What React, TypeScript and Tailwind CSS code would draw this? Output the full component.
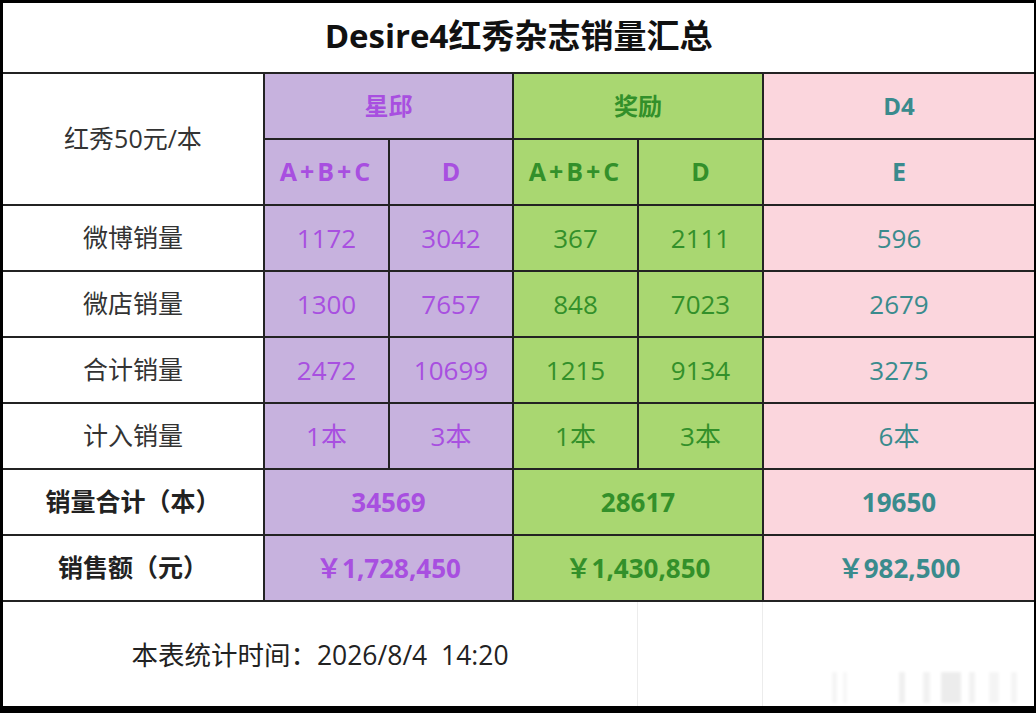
import React from "react";

const FONT = { fontFamily: '"Open Sans", "Noto Sans CJK SC", sans-serif' };

const P = "bg-[#c7b2de]";
const G = "bg-[#a9d771]";
const K = "bg-[#fbd6dd]";
const PT = "text-[#a84fe0]";
const GT = "text-[#33902a]";
const KT = "text-[#3a8b8d]";

function Cell({ className = "", children }: { className?: string; children?: React.ReactNode }) {
  return <div className={`flex items-center justify-center ${className}`}>{children}</div>;
}

const rows = [
  { label: "微博销量", v: ["1172", "3042", "367", "2111", "596"] },
  { label: "微店销量", v: ["1300", "7657", "848", "7023", "2679"] },
  { label: "合计销量", v: ["2472", "10699", "1215", "9134", "3275"] },
  { label: "计入销量", v: ["1本", "3本", "1本", "3本", "6本"] },
];

const bars = [
  { l: 69, w: 5, o: "opacity-[0.04]" },
  { l: 80, w: 4, o: "opacity-[0.03]" },
  { l: 136, w: 6, o: "opacity-[0.06]" },
  { l: 160, w: 7, o: "opacity-[0.05]" },
  { l: 178, w: 20, o: "opacity-[0.07]" },
  { l: 206, w: 6, o: "opacity-[0.05]" },
  { l: 226, w: 10, o: "opacity-[0.04]" },
  { l: 248, w: 6, o: "opacity-[0.04]" },
];

export default function App() {
  const dataCls = "text-[26px]";
  return (
    <div style={FONT} className="w-[1036px] h-[713px] bg-black pt-[3px] pl-[3px] pr-[2px] pb-[7px] flex flex-col">
      <div className="grid grid-cols-[260px_123px_122px_123px_123px_270px] grid-rows-[69px_64px_64px_64px_64px_64px_64px_64px_64px] gap-[2px] bg-[#232323] pb-[2px]">
        <Cell className="col-span-6 bg-white text-[33px] font-bold text-[#111] pb-[3px]">Desire4红秀杂志销量汇总</Cell>

        <Cell className="row-span-2 bg-white text-[25px] text-[#333]">红秀50元/本</Cell>
        <Cell className={`col-span-2 ${P} ${PT} text-[24px] font-bold`}>星邱</Cell>
        <Cell className={`col-span-2 ${G} ${GT} text-[24px] font-bold`}>奖励</Cell>
        <Cell className={`${K} ${KT} text-[24px] font-bold`}>D4</Cell>

        <Cell className={`${P} ${PT} text-[25px] font-bold tracking-[3px]`}>A+B+C</Cell>
        <Cell className={`${P} ${PT} text-[25px] font-bold`}>D</Cell>
        <Cell className={`${G} ${GT} text-[25px] font-bold tracking-[3px]`}>A+B+C</Cell>
        <Cell className={`${G} ${GT} text-[25px] font-bold`}>D</Cell>
        <Cell className={`${K} ${KT} text-[25px] font-bold`}>E</Cell>

        {rows.map((r) => (
          <React.Fragment key={r.label}>
            <Cell className="bg-white text-[25px] text-[#333]">{r.label}</Cell>
            <Cell className={`${P} ${PT} ${dataCls}`}>{r.v[0]}</Cell>
            <Cell className={`${P} ${PT} ${dataCls}`}>{r.v[1]}</Cell>
            <Cell className={`${G} ${GT} ${dataCls}`}>{r.v[2]}</Cell>
            <Cell className={`${G} ${GT} ${dataCls}`}>{r.v[3]}</Cell>
            <Cell className={`${K} ${KT} ${dataCls}`}>{r.v[4]}</Cell>
          </React.Fragment>
        ))}

        <Cell className="bg-white text-[25px] font-bold text-[#222]">销量合计（本）</Cell>
        <Cell className={`col-span-2 ${P} ${PT} text-[26px] font-bold`}>34569</Cell>
        <Cell className={`col-span-2 ${G} ${GT} text-[26px] font-bold`}>28617</Cell>
        <Cell className={`${K} ${KT} text-[26px] font-bold`}>19650</Cell>

        <Cell className="bg-white text-[25px] font-bold text-[#222]">销售额（元）</Cell>
        <Cell className={`col-span-2 ${P} ${PT} text-[26px] font-bold`}>￥1,728,450</Cell>
        <Cell className={`col-span-2 ${G} ${GT} text-[26px] font-bold`}>￥1,430,850</Cell>
        <Cell className={`${K} ${KT} text-[26px] font-bold`}>￥982,500</Cell>
      </div>

      <div className="flex-1 bg-white grid grid-cols-[634px_1fr_272px]">
        <Cell className="text-[26.5px] text-[#222] pt-[3px]">本表统计时间：2026/8/4&nbsp;&nbsp;14:20</Cell>
        <div className="border-l border-[#ececec]" />
        <div className="relative border-l border-[#ececec]">
          {bars.map((b, i) => (
            <div
              key={i}
              className={`absolute top-[70px] h-[31px] bg-black blur-[1.5px] ${b.o}`}
              style={{ left: b.l, width: b.w }}
            />
          ))}
        </div>
      </div>
    </div>
  );
}
